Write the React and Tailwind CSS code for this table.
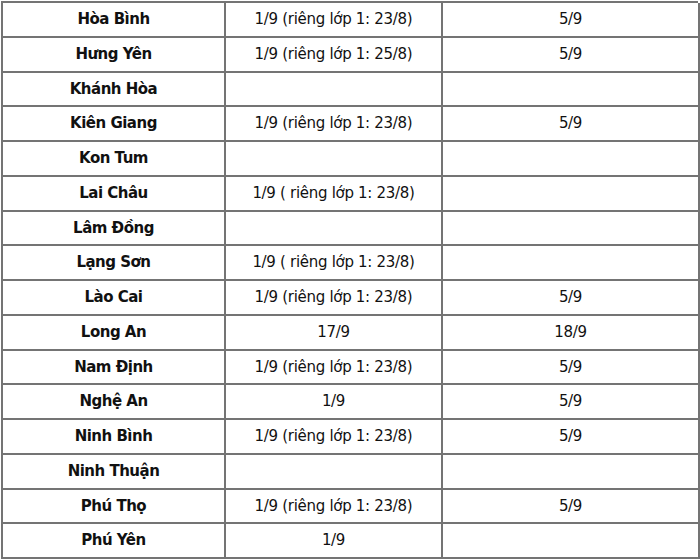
const rows = [
  ['Hòa Bình', '1/9 (riêng lớp 1: 23/8)', '5/9'],
  ['Hưng Yên', '1/9 (riêng lớp 1: 25/8)', '5/9'],
  ['Khánh Hòa', '', ''],
  ['Kiên Giang', '1/9 (riêng lớp 1: 23/8)', '5/9'],
  ['Kon Tum', '', ''],
  ['Lai Châu', '1/9 ( riêng lớp 1: 23/8)', ''],
  ['Lâm Đồng', '', ''],
  ['Lạng Sơn', '1/9 ( riêng lớp 1: 23/8)', ''],
  ['Lào Cai', '1/9 (riêng lớp 1: 23/8)', '5/9'],
  ['Long An', '17/9', '18/9'],
  ['Nam Định', '1/9 (riêng lớp 1: 23/8)', '5/9'],
  ['Nghệ An', '1/9', '5/9'],
  ['Ninh Bình', '1/9 (riêng lớp 1: 23/8)', '5/9'],
  ['Ninh Thuận', '', ''],
  ['Phú Thọ', '1/9 (riêng lớp 1: 23/8)', '5/9'],
  ['Phú Yên', '1/9', ''],
];

export default function App() {
  return (
    <div className="h-[560px] w-[700px] overflow-hidden bg-white pl-px pt-px font-['DejaVu_Sans',sans-serif] text-[15px] tracking-[-0.3px] text-[#111]">
      <div className="grid w-[697px] grid-cols-[223px_217px_257px] border-l-2 border-t-2 border-[#747474]">
        {rows.map(([province, open, start]) => (
          <div key={province} className="contents">
            <div className="flex h-[34.75px] items-center justify-center border-b-2 border-r-2 border-[#747474] font-bold tracking-[-0.5px]">
              {province}
            </div>
            <div className="flex h-[34.75px] items-center justify-center whitespace-pre border-b-2 border-r-2 border-[#747474]">
              {open}
            </div>
            <div className="flex h-[34.75px] items-center justify-center border-b-2 border-r-2 border-[#747474]">
              {start}
            </div>
          </div>
        ))}
      </div>
    </div>
  );
}
